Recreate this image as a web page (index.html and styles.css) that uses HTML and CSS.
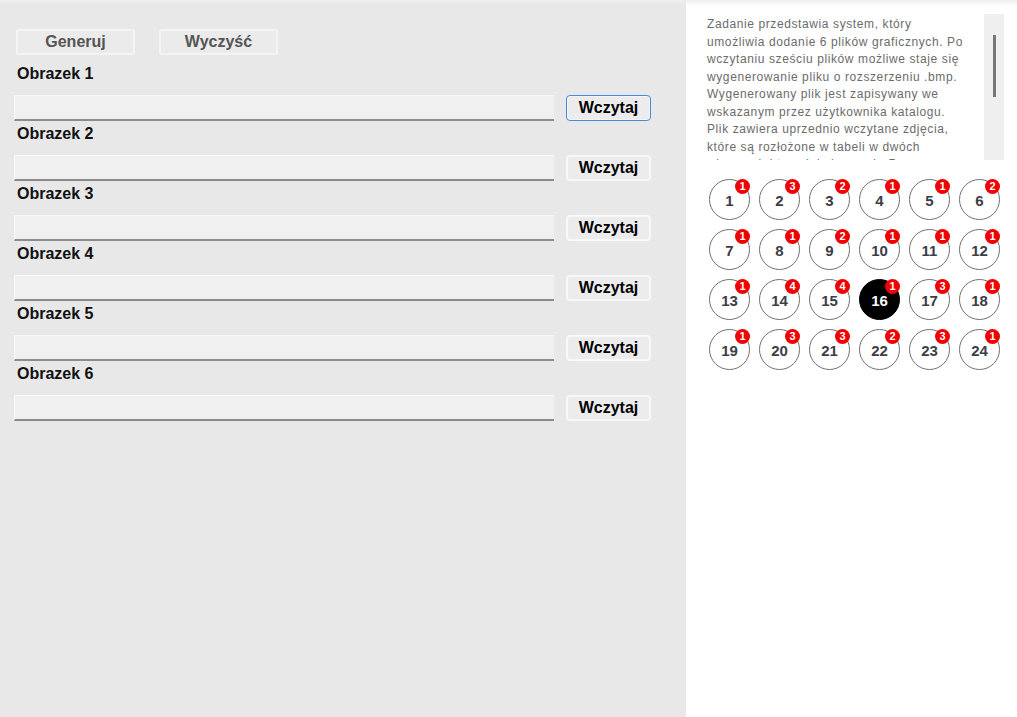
FILE: index.html
```html
<!DOCTYPE html>
<html lang="pl">
<head>
<meta charset="utf-8">
<title>Generator BMP</title>
<link rel="stylesheet" href="styles.css">
</head>
<body>
<div class="page">
  <div class="left">
    <div class="actions">
      <button class="act">Generuj</button>
      <button class="act">Wyczyść</button>
    </div>
    <div class="row">
      <div class="label">Obrazek 1</div>
      <div class="line"><div class="field"></div><button class="load focus">Wczytaj</button></div>
    </div>
    <div class="row">
      <div class="label">Obrazek 2</div>
      <div class="line"><div class="field"></div><button class="load">Wczytaj</button></div>
    </div>
    <div class="row">
      <div class="label">Obrazek 3</div>
      <div class="line"><div class="field"></div><button class="load">Wczytaj</button></div>
    </div>
    <div class="row">
      <div class="label">Obrazek 4</div>
      <div class="line"><div class="field"></div><button class="load">Wczytaj</button></div>
    </div>
    <div class="row">
      <div class="label">Obrazek 5</div>
      <div class="line"><div class="field"></div><button class="load">Wczytaj</button></div>
    </div>
    <div class="row">
      <div class="label">Obrazek 6</div>
      <div class="line"><div class="field"></div><button class="load">Wczytaj</button></div>
    </div>
  </div>
  <div class="right">
    <div class="desc">
      <div class="desc-text">Zadanie przedstawia system, który<br>umożliwia dodanie 6 plików graficznych. Po<br>wczytaniu sześciu plików możliwe staje się<br>wygenerowanie pliku o rozszerzeniu .bmp.<br>Wygenerowany plik jest zapisywany we<br>wskazanym przez użytkownika katalogu.<br>Plik zawiera uprzednio wczytane zdjęcia,<br>które są rozłożone w tabeli w dwóch<br>wierszach i trzech kolumnach. Po<br>wygenerowaniu pliku można go otworzyć.</div>
      <div class="scroll"><div class="thumb"></div></div>
    </div>
    <div class="grid">
      <div class="num">1<span class="badge">1</span></div>
      <div class="num">2<span class="badge">3</span></div>
      <div class="num">3<span class="badge">2</span></div>
      <div class="num">4<span class="badge">1</span></div>
      <div class="num">5<span class="badge">1</span></div>
      <div class="num">6<span class="badge">2</span></div>
      <div class="num">7<span class="badge">1</span></div>
      <div class="num">8<span class="badge">1</span></div>
      <div class="num">9<span class="badge">2</span></div>
      <div class="num">10<span class="badge">1</span></div>
      <div class="num">11<span class="badge">1</span></div>
      <div class="num">12<span class="badge">1</span></div>
      <div class="num">13<span class="badge">1</span></div>
      <div class="num">14<span class="badge">4</span></div>
      <div class="num">15<span class="badge">4</span></div>
      <div class="num active">16<span class="badge">1</span></div>
      <div class="num">17<span class="badge">3</span></div>
      <div class="num">18<span class="badge">1</span></div>
      <div class="num">19<span class="badge">1</span></div>
      <div class="num">20<span class="badge">3</span></div>
      <div class="num">21<span class="badge">3</span></div>
      <div class="num">22<span class="badge">2</span></div>
      <div class="num">23<span class="badge">3</span></div>
      <div class="num">24<span class="badge">1</span></div>
    </div>
  </div>
</div>
</body>
</html>
```

FILE: styles.css
```css
* { box-sizing: border-box; }
html, body { margin: 0; padding: 0; }
body {
  font-family: "Liberation Sans", Arial, sans-serif;
  width: 1017px;
  height: 717px;
  overflow: hidden;
}
.page {
  position: relative;
  display: flex;
  height: 717px;
}
.page::before {
  content: "";
  position: absolute;
  left: 0; right: 0; top: 0;
  height: 6px;
  background: linear-gradient(to bottom, rgba(238,238,238,1), rgba(238,238,238,0));
  pointer-events: none;
}
.left {
  width: 686px;
  background: #e8e8e8;
  padding: 29px 0 0 14px;
}
.actions {
  display: flex;
  gap: 24px;
  padding-left: 2px;
  margin-bottom: 9px;
}
.act {
  width: 119px;
  height: 26px;
  border: 2px solid #f4f4f4;
  border-radius: 2px;
  background: #ebebeb;
  color: #555;
  font: bold 16px "Liberation Sans", Arial, sans-serif;
  padding: 0;
}
.row { height: 60px; }
.label {
  height: 20px;
  line-height: 20px;
  padding-left: 3px;
  font-weight: bold;
  font-size: 16px;
  color: #111;
  margin-bottom: 11px;
}
.line {
  display: flex;
  align-items: center;
  gap: 12px;
}
.field {
  width: 540px;
  height: 26px;
  background: #f0f0f0;
  border-top: 1px solid #fafafa;
  border-left: 1px solid #fafafa;
  border-bottom: 2px solid #8c8c8c;
}
.load {
  width: 85px;
  height: 26px;
  padding: 0;
  border: 2px solid #f8f8f8;
  border-radius: 4px;
  background: #ececec;
  color: #000;
  font: bold 16px "Liberation Sans", Arial, sans-serif;
}
.load.focus {
  border: 1px solid #3f8fdc;
  box-shadow: inset 0 0 0 1px #f4f4f4;
}
.right {
  flex: 1;
  background: #fff;
  padding: 14px 0 0 18px;
}
.desc {
  display: flex;
  height: 146px;
  width: 300px;
}
.desc-text {
  flex: 1;
  overflow: hidden;
  padding: 2px 0 0 3px;
  font-size: 12px;
  letter-spacing: 0.6px;
  line-height: 17.5px;
  color: #6b6b6b;
  white-space: nowrap;
}
.scroll {
  width: 20px;
  background: #efefef;
  padding: 21px 0 0 9px;
}
.thumb {
  width: 3px;
  height: 62px;
  background: #777;
}
.grid {
  margin-top: 19px;
  margin-left: 5px;
  display: grid;
  grid-template-columns: repeat(6, 41px);
  grid-auto-rows: 41px;
  column-gap: 9px;
  row-gap: 9px;
}
.num {
  position: relative;
  width: 41px;
  height: 41px;
  border-radius: 50%;
  border: 1.5px solid #707070;
  display: flex;
  align-items: center;
  justify-content: center;
  font-weight: bold;
  font-size: 15px;
  color: #3d3d46;
  padding-top: 1px;
}
.num.active {
  background: #000;
  border-color: #000;
  color: #fff;
}
.badge {
  position: absolute;
  top: -1px;
  right: -1px;
  width: 15px;
  height: 15px;
  border-radius: 50%;
  background: #f00000;
  color: #fff;
  font-size: 11px;
  font-weight: bold;
  line-height: 15px;
  text-align: center;
}
```
